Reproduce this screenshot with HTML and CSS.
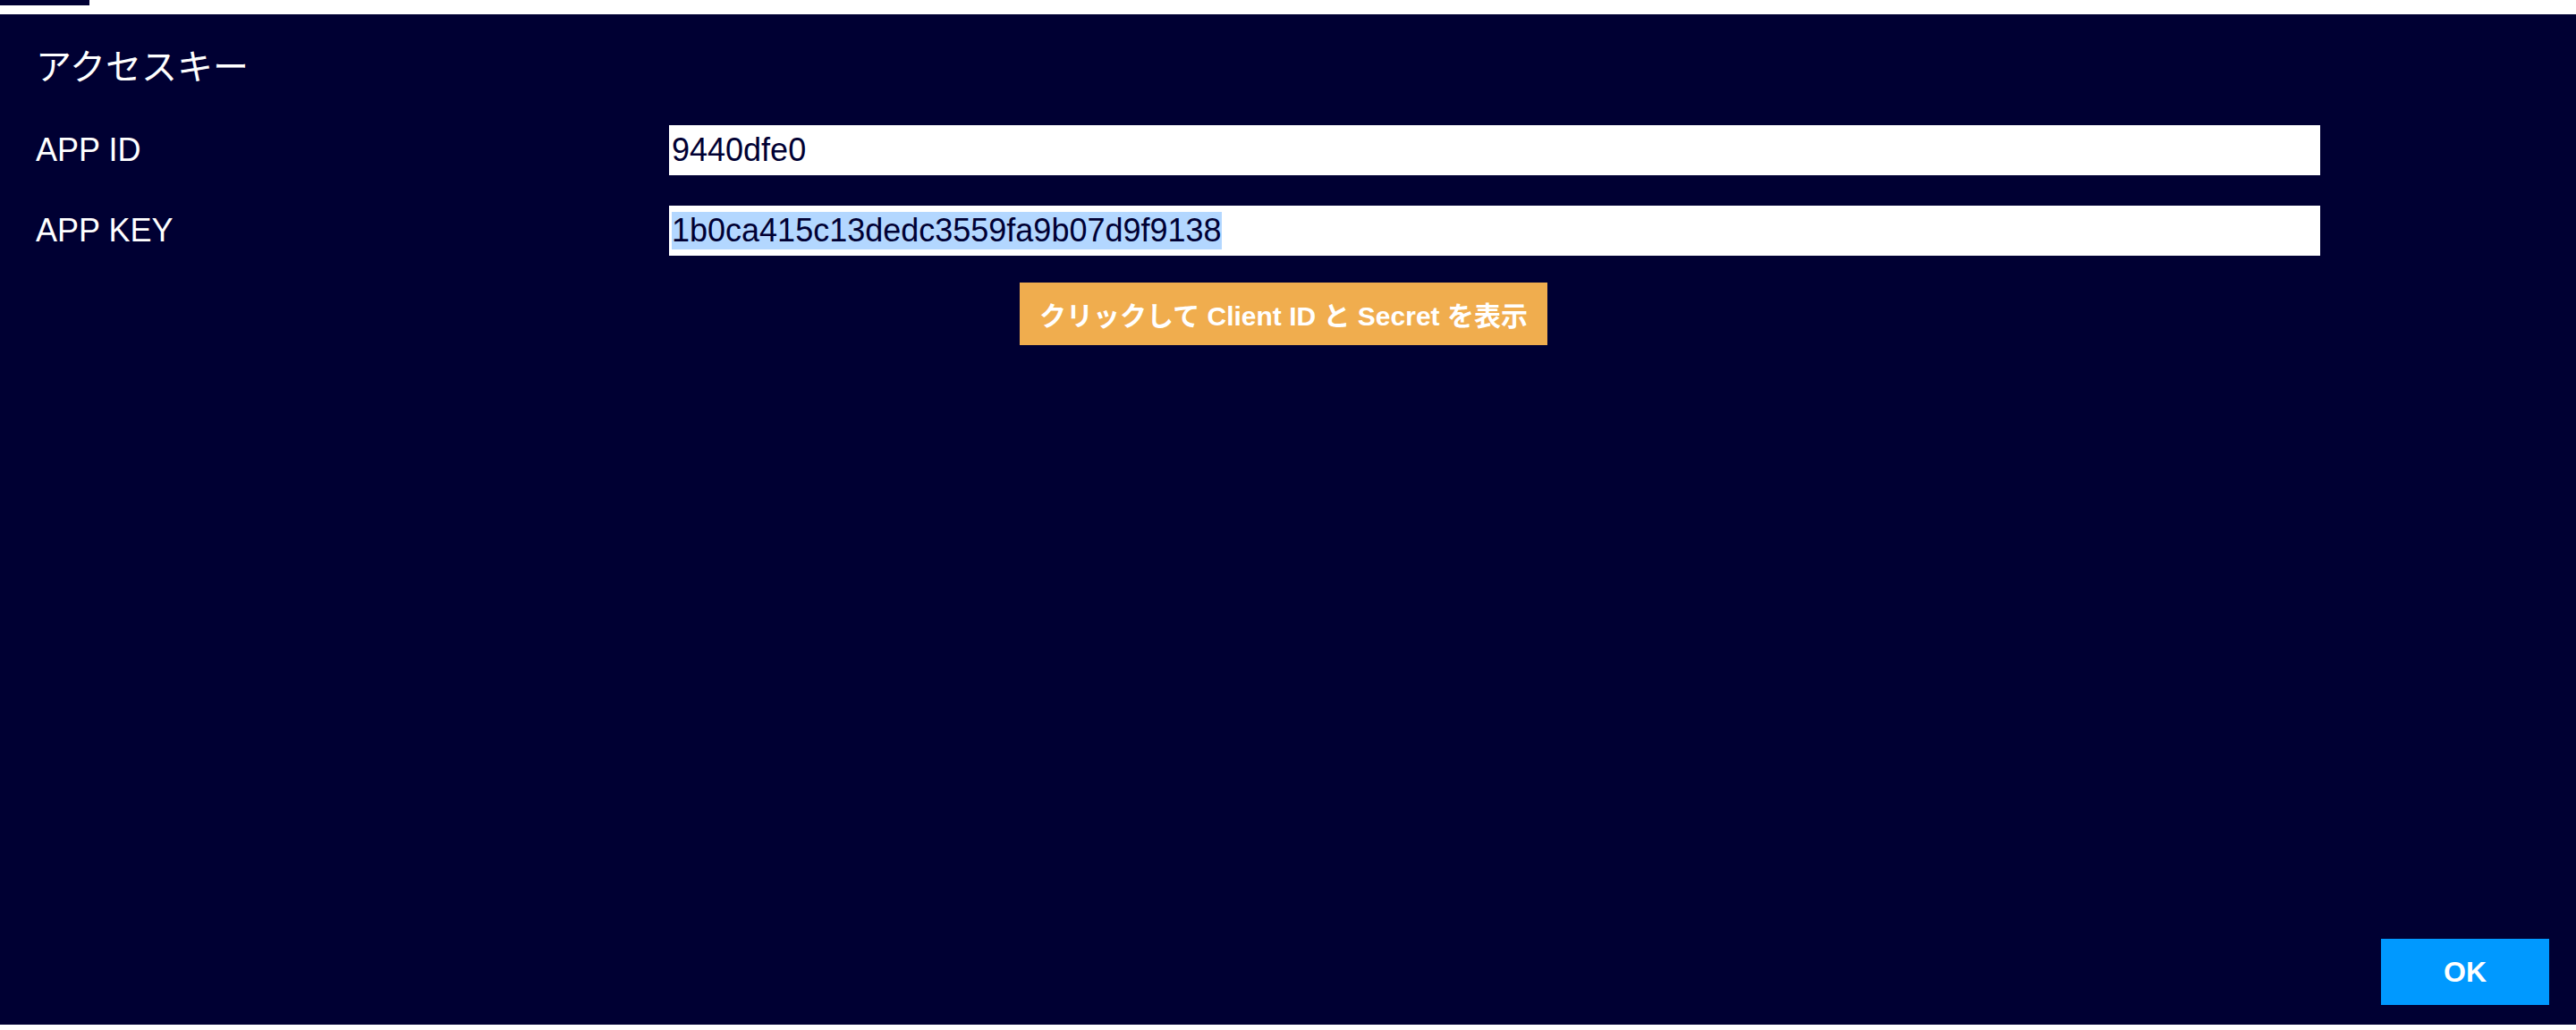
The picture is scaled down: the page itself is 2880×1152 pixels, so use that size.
FILE: index.html
```html
<!DOCTYPE html>
<html lang="ja">
<head>
<meta charset="utf-8">
<title>アクセスキー</title>
<link rel="stylesheet" href="styles.css">
</head>
<body>
<div class="topbar"><div class="tab"></div></div>
<main class="panel">
  <h2 class="title">アクセスキー</h2>
  <div class="fields">
    <label class="label">APP ID</label>
    <div class="field"><span class="value">9440dfe0</span></div>
    <label class="label">APP KEY</label>
    <div class="field"><span class="value selected">1b0ca415c13dedc3559fa9b07d9f9138</span></div>
  </div>
  <div class="reveal-row">
    <button class="reveal">クリックして Client ID と Secret を表示</button>
  </div>
  <div class="footer">
    <button class="ok">OK</button>
  </div>
</main>
</body>
</html>
```
FILE: styles.css
```css
html, body {
  margin: 0;
  padding: 0;
  background: #ffffff;
}
body {
  width: 2880px;
  height: 1152px;
  overflow: hidden;
  font-family: "Liberation Sans", "Noto Sans CJK JP", sans-serif;
}
.topbar {
  height: 16px;
  background: #ffffff;
}
.tab {
  width: 100px;
  height: 6px;
  background: #000033;
}
.panel {
  height: 1130px;
  background: #000033;
  display: flex;
  flex-direction: column;
  box-sizing: border-box;
  padding: 32px 0 0 40px;
}
.title {
  margin: 0;
  font-family: "Noto Sans CJK JP", sans-serif;
  font-weight: 400;
  font-size: 40px;
  line-height: 48px;
  color: #ffffff;
}
.fields {
  margin-top: 44px;
  display: grid;
  grid-template-columns: 708px 1846px;
  row-gap: 34px;
  align-items: center;
}
.label {
  font-size: 36px;
  color: #ffffff;
}
.field {
  height: 56px;
  background: #ffffff;
  display: flex;
  align-items: center;
  padding-left: 3px;
  box-sizing: border-box;
}
.value {
  font-size: 36px;
  color: #000033;
  line-height: 42px;
}
.selected {
  background: #b3d7ff;
}
.reveal-row {
  margin-top: 30px;
  display: flex;
  justify-content: center;
  padding-right: 50px;
}
.reveal {
  height: 70px;
  border: 0;
  padding: 0 22px;
  background: #f0ad4e;
  color: #ffffff;
  font-family: "Liberation Sans", "Noto Sans CJK JP", sans-serif;
  font-weight: 700;
  font-size: 30px;
}
.footer {
  margin-top: auto;
  display: flex;
  justify-content: flex-end;
  padding: 0 30px 22px 0;
}
.ok {
  width: 188px;
  height: 74px;
  border: 0;
  background: #0099ff;
  color: #ffffff;
  font-family: "Liberation Sans", sans-serif;
  font-weight: 700;
  font-size: 32px;
}
```
